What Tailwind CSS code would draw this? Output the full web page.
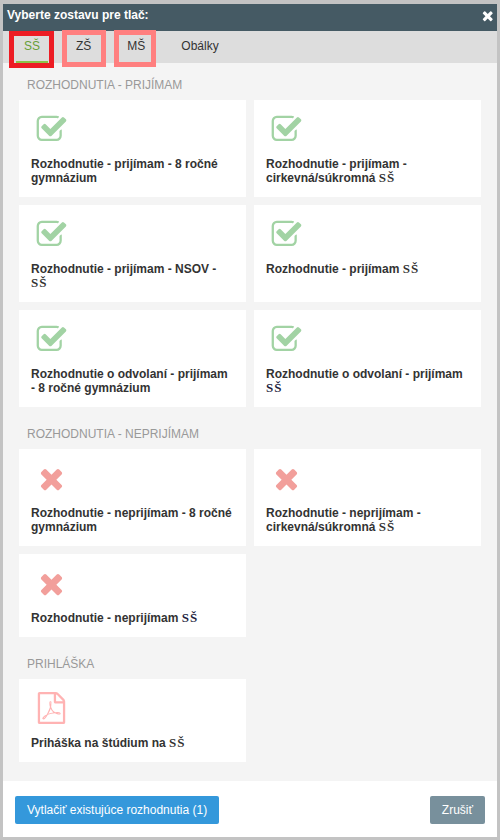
<!DOCTYPE html>
<html lang="sk">
<head>
  <meta charset="UTF-8" />
  <meta name="viewport" content="width=device-width, initial-scale=1" />
  <title>Vyberte zostavu pre tlač</title>
  <script src="https://cdn.jsdelivr.net/npm/@tailwindcss/browser@4"></script>
</head>
<body class="h-[840px] bg-[#c3c3c3] pt-1 px-[3px] pb-[3px] font-['Liberation_Sans',Arial,sans-serif] text-xs leading-[14px] text-[#333]">

  <!-- Icons -->
  <svg class="hidden">
    <symbol id="check" viewBox="-28 -28 1792 1792"><path d="M1472 930v318q0 119-84.5 203.5t-203.5 84.5h-832q-119 0-203.5-84.5t-84.5-203.5v-832q0-119 84.5-203.5t203.5-84.5h832q63 0 117 25 15 7 18 23 3 17-9 29l-49 49q-10 10-23 10-3 0-9-2-23-6-45-6h-832q-66 0-113 47t-47 113v832q0 66 47 113t113 47h832q66 0 113-47t47-113v-254q0-13 9-22l64-64q10-10 23-10 6 0 12 3 20 8 20 29zm231-489l-814 814q-24 24-57 24t-57-24l-430-430q-24-24-24-57t24-57l110-110q24-24 57-24t57 24l263 263 647-647q24-24 57-24t57 24l110 110q24 24 24 57t-24 57z"/></symbol>
    <symbol id="times" viewBox="-28 -28 1792 1792"><path d="M1490 1322q0 40-28 68l-136 136q-28 28-68 28t-68-28l-294-294-294 294q-28 28-68 28t-68-28l-136-136q-28-28-28-68t28-68l294-294-294-294q-28-28-28-68t28-68l136-136q28-28 68-28t68 28l294 294 294-294q28-28 68-28t68 28l136 136q28 28 28 68t-28 68l-294 294 294 294q28 28 28 68z"/></symbol>
    <symbol id="pdf" viewBox="-28 0 1792 1792"><path d="M1596 380q28 28 48 76t20 88v1152q0 40-28 68t-68 28h-1344q-40 0-68-28t-28-68v-1600q0-40 28-68t68-28h896q40 0 88 20t76 48zm-444-244v376h376q-10-29-22-41l-313-313q-12-12-41-22zm384 1528v-1024h-416q-40 0-68-28t-28-68v-416h-768v1536h1280zm-514-593q33 26 84 56 59-7 117-7 147 0 177 49 16 22 2 52 0 1-1 2l-2 2v1q-6 38-71 38-48 0-115-20t-130-53q-221 24-392 83-153 262-242 262-15 0-28-7l-24-12q-1-1-6-5-10-10-6-36 9-40 56-91.5t132-96.5q14-9 23 6 2 2 2 4 52-85 107-197 68-136 104-262-24-82-30.5-159.5t6.5-127.5q11-40 42-40h22q23 0 35 15 18 21 9 68-2 6-4 8 1 3 1 8v30q-2 123-14 192 55 164 146 238zm-576 411q52-24 137-158-51 40-87.5 84t-49.5 74zm398-920q-15 42-2 132 1-7 7-44 0-3 7-43 1-4 4-8-1-1-1-2-1-2-1-3-1-22-13-36 0 1-1 2v2zm-124 661q135-54 284-81-2-1-13-9.5t-16-13.5q-76-67-127-176-27 86-83 197-30 56-45 83zm646-16q-24-24-140-24 76 28 124 28 14 0 18-1 0-1-2-3z"/></symbol>
  </svg>

  <div class="flex h-full flex-col bg-[#f4f4f4]">
    <!-- Title bar -->
    <header class="flex h-[27px] shrink-0 items-center justify-between bg-[#455a64] pl-1 pr-[2px] pb-[5px] font-bold text-white">
      <h2>Vyberte zostavu pre tlač:</h2>
      <button aria-label="Zavrieť"><svg class="size-[15px] fill-white"><use href="#times"/></svg></button>
    </header>

    <!-- Tabs -->
    <nav class="flex h-8 shrink-0 gap-5 bg-[#ddd] pl-[13px]">
      <a class="relative border-b-2 border-[#8bc34a] px-2 pt-2 text-[#689f38]">SŠ
        <span class="absolute -left-[7px] top-0 h-[37px] w-[45px] border-5 border-[#ed1c24]"></span>
      </a>
      <a class="relative px-2 pt-2">ZŠ
        <span class="absolute -left-[6px] -top-px h-[37px] w-[44px] border-5 border-[#ff7f7f]"></span>
      </a>
      <a class="relative px-2 pt-2">MŠ
        <span class="absolute -left-[5px] -top-px h-[37px] w-[42px] border-5 border-[#ff7f7f]"></span>
      </a>
      <a class="px-2 pt-2">Obálky</a>
    </nav>

    <main class="flex-1 px-4 pt-[15px]">
      <h3 class="mb-2 pl-2 text-[#999]">ROZHODNUTIA - PRIJÍMAM</h3>
      <div class="grid grid-cols-[227px_227px] gap-2 font-bold">
        <div class="h-[97px] bg-white px-3 pt-[13px]">
          <svg class="mb-3 ml-1 size-8 fill-[#a2d3a4]"><use href="#check"/></svg>
          <p>Rozhodnutie - prijímam - 8 ročné gymnázium</p>
        </div>
        <div class="h-[97px] bg-white px-3 pt-[13px]">
          <svg class="mb-3 ml-1 size-8 fill-[#a2d3a4]"><use href="#check"/></svg>
          <p>Rozhodnutie - prijímam - cirkevná/súkromná <span class="font-['Liberation_Serif',serif] text-[13px] leading-none tracking-[1px]">SŠ</span></p>
        </div>
        <div class="h-[97px] bg-white px-3 pt-[13px]">
          <svg class="mb-3 ml-1 size-8 fill-[#a2d3a4]"><use href="#check"/></svg>
          <p>Rozhodnutie - prijímam - NSOV -<br /><span class="font-['Liberation_Serif',serif] text-[13px] leading-none tracking-[1px]">SŠ</span></p>
        </div>
        <div class="h-[97px] bg-white px-3 pt-[13px]">
          <svg class="mb-3 ml-1 size-8 fill-[#a2d3a4]"><use href="#check"/></svg>
          <p>Rozhodnutie - prijímam <span class="font-['Liberation_Serif',serif] text-[13px] leading-none tracking-[1px]">SŠ</span></p>
        </div>
        <div class="h-[97px] bg-white px-3 pt-[13px]">
          <svg class="mb-3 ml-1 size-8 fill-[#a2d3a4]"><use href="#check"/></svg>
          <p>Rozhodnutie o odvolaní - prijímam - 8 ročné gymnázium</p>
        </div>
        <div class="h-[97px] bg-white px-3 pt-[13px]">
          <svg class="mb-3 ml-1 size-8 fill-[#a2d3a4]"><use href="#check"/></svg>
          <p>Rozhodnutie o odvolaní - prijímam <span class="font-['Liberation_Serif',serif] text-[13px] leading-none tracking-[1px] text-[#1f1f3f]">SŠ</span></p>
        </div>
      </div>

      <h3 class="mb-2 mt-5 pl-2 text-[#999]">ROZHODNUTIA - NEPRIJÍMAM</h3>
      <div class="grid grid-cols-[227px_227px] gap-2 font-bold">
        <div class="h-[97px] bg-white px-3 pt-[13px]">
          <svg class="mb-3 ml-1 size-8 fill-[#f29f9b]"><use href="#times"/></svg>
          <p>Rozhodnutie - neprijímam - 8 ročné gymnázium</p>
        </div>
        <div class="h-[97px] bg-white px-3 pt-[13px]">
          <svg class="mb-3 ml-1 size-8 fill-[#f29f9b]"><use href="#times"/></svg>
          <p>Rozhodnutie - neprijímam - cirkevná/súkromná <span class="font-['Liberation_Serif',serif] text-[13px] leading-none tracking-[1px]">SŠ</span></p>
        </div>
        <div class="h-[83px] bg-white px-3 pt-[13px]">
          <svg class="mb-3 ml-1 size-8 fill-[#f29f9b]"><use href="#times"/></svg>
          <p>Rozhodnutie - neprijímam <span class="font-['Liberation_Serif',serif] text-[13px] leading-none tracking-[1px] text-[#1f1f3f]">SŠ</span></p>
        </div>
      </div>

      <h3 class="mb-2 mt-5 pl-2 text-[#999]">PRIHLÁŠKA</h3>
      <div class="grid grid-cols-[227px_227px] gap-2 font-bold">
        <div class="h-[83px] bg-white px-3 pt-[13px]">
          <svg class="mb-3 ml-1 size-8 fill-[#ffb3b3]"><use href="#pdf"/></svg>
          <p>Priháška na štúdium na <span class="font-['Liberation_Serif',serif] text-[13px] leading-none tracking-[1px]">SŠ</span></p>
        </div>
      </div>
    </main>

    <!-- Buttons -->
    <footer class="flex h-14 shrink-0 items-center justify-between bg-white px-3 pt-[2px] text-white">
      <button class="h-7 rounded-xs bg-[#3498db] px-3">Vytlačiť existujúce rozhodnutia (1)</button>
      <button class="h-7 rounded-xs bg-[#78909c] px-3">Zrušiť</button>
    </footer>
  </div>
</body>
</html>
